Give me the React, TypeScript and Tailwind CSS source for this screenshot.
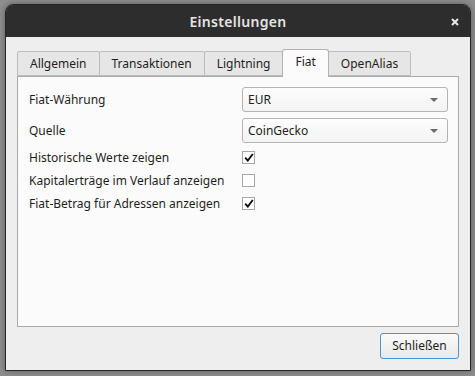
import React, { useState } from 'react';

const tabs = ['Allgemein', 'Transaktionen', 'Lightning', 'Fiat', 'OpenAlias'];

const Combo: React.FC<{ value: string }> = ({ value }) => (
    <div className="w-[206px] h-[25px] flex items-center justify-between pl-[5px] pr-[9px] rounded-[3px] border border-[#b4b4b4] bg-gradient-to-b from-[#fdfdfd] to-[#f3f3f3] text-[12px] text-[#1e1e1e]">
        <span>{value}</span>
        <svg width="8" height="4" viewBox="0 0 8 4">
            <path d="M0 0 L8 0 L4 4 Z" fill="#6b6b6b" />
        </svg>
    </div>
);

const Check: React.FC<{ on: boolean; toggle: () => void }> = ({ on, toggle }) => (
    <button
        onClick={toggle}
        className="w-[13px] h-[13px] border border-[#a6a6a6] bg-white flex items-center justify-center"
    >
        {on && (
            <svg width="10" height="9" viewBox="0 0 10 9">
                <path d="M1.2 4.6 L3.8 7.6 L8.8 1" stroke="#111" strokeWidth="1.9" fill="none" />
            </svg>
        )}
    </button>
);

export default function App() {
    const [active, setActive] = useState('Fiat');
    const [checks, setChecks] = useState([true, false, true]);

    const flip = (i: number) => setChecks(prev => prev.map((c, j) => (j === i ? !c : c)));

    const checkRows = [
        'Historische Werte zeigen',
        'Kapitalerträge im Verlauf anzeigen',
        'Fiat-Betrag für Adressen anzeigen',
    ];

    return (
        <div
            className="w-[475px] h-[376px] bg-[#8e8e8e] pt-[4px] pl-[5px] overflow-hidden"
            style={{ fontFamily: '"Noto Sans", "Open Sans", sans-serif' }}
        >
            <div className="w-[466px] h-[367px] flex flex-col rounded-t-[8px] border border-[#262626] shadow-[0_0_6px_rgba(0,0,0,0.35)] overflow-hidden">
                {/* title bar */}
                <div className="h-[32px] shrink-0 bg-[#2d2d2d] relative flex items-center justify-center">
                    <span className="text-[14px] font-semibold text-[#e4e4e4] tracking-[0.3px]">Einstellungen</span>
                    <svg className="absolute right-[11px] top-[13px]" width="8" height="8" viewBox="0 0 8 8">
                        <path d="M1 1 L7 7 M7 1 L1 7" stroke="#e8e8e8" strokeWidth="2" />
                    </svg>
                </div>

                <div className="flex-1 bg-[#eeeeee] pt-[12px] px-[11px] pb-[11px] flex flex-col">
                    {/* tabs */}
                    <div className="flex items-end h-[27px] relative z-10">
                        {tabs.map(t => {
                            const sel = t === active;
                            return (
                                <button
                                    key={t}
                                    onClick={() => setActive(t)}
                                    className={
                                        sel
                                            ? 'h-[28px] -mb-px px-[12px] pb-[3px] bg-[#fbfbfb] border border-b-0 border-[#b2b2b2] rounded-t-[3px] text-[12px] text-[#1e1e1e] -ml-px relative'
                                            : 'h-[25px] px-[12px] bg-[#e6e6e6] border border-[#bcbcbc] rounded-t-[2px] text-[12px] text-[#1e1e1e] -ml-px first:ml-0'
                                    }
                                >
                                    {t}
                                </button>
                            );
                        })}
                    </div>

                    {/* pane */}
                    <div className="h-[251px] bg-[#fbfbfb] border border-[#aaaaaa] pt-[10px] pl-[11px] pr-[10px] flex flex-col text-[12px] text-[#1e1e1e]">
                        <div className="flex items-center justify-between">
                            <span>Fiat-Währung</span>
                            <Combo value="EUR" />
                        </div>
                        <div className="flex items-center justify-between mt-[6px]">
                            <span>Quelle</span>
                            <Combo value="CoinGecko" />
                        </div>
                        <div className="mt-[3px] flex flex-col">
                            {checkRows.map((label, i) => (
                                <div key={label} className="h-[23px] grid grid-cols-[213px_1fr] items-center">
                                    <span>{label}</span>
                                    <Check on={checks[i]} toggle={() => flip(i)} />
                                </div>
                            ))}
                        </div>
                    </div>

                    <div className="flex justify-end mt-[6px]">
                        <button className="w-[79px] h-[26px] rounded-[3px] border border-[#4f94c9] bg-gradient-to-b from-[#fafafa] to-[#e9e9e9] text-[12px] text-[#1e1e1e]">
                            Schließen
                        </button>
                    </div>
                </div>
            </div>
        </div>
    );
}
